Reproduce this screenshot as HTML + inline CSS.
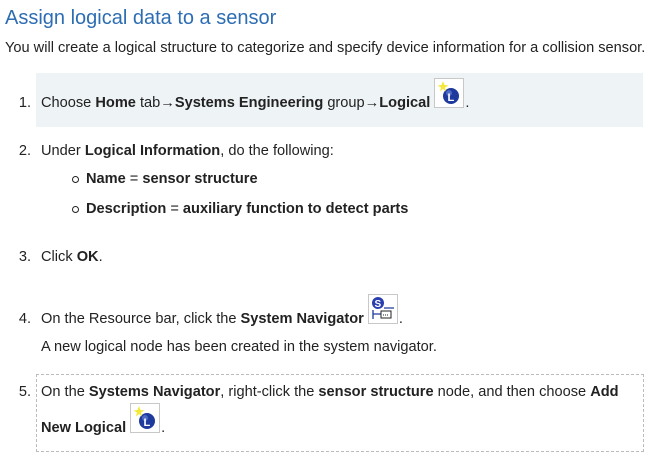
<!DOCTYPE html>
<html><head><style>
body{margin:0;width:647px;height:459px;background:#fff;font-family:"Liberation Sans",Arial,sans-serif;color:#222;position:relative;overflow:hidden}
.a{position:absolute;white-space:nowrap;font-size:14.6px;line-height:16px}
b{font-weight:bold}
.w{display:inline-block;width:35px;height:16px;position:relative;vertical-align:top}
.ic{position:absolute;left:4px;top:-17px;width:28px;height:28px;border:1px solid #c8c8c8;background:#fff}
.n{position:absolute;width:31px;text-align:right}
.t{position:absolute;left:41px}
</style></head><body>
<div class="a" style="left:5px;top:7px;font-size:20px;line-height:22px;color:#2d6db3">Assign logical data to a sensor</div>
<div class="a" style="left:5px;top:40px">You will create a logical structure to categorize and specify device information for a collision sensor.</div>

<div style="position:absolute;left:36px;top:73px;width:607px;height:54px;background:#eef3f6"></div>
<div class="a" style="left:0;top:95px"><span class="n">1.</span><span class="t">Choose <b>Home</b> tab→<b>Systems Engineering</b> group→<b>Logical</b><span class="w"><span class="ic"><svg width="28" height="28" viewBox="0 0 28 28"><circle cx="16" cy="17" r="8" fill="#1e3a9c"/><circle cx="14" cy="14" r="3" fill="#6a8ce0" opacity=".6"/><text x="12.5" y="22" font-family="Liberation Sans" font-weight="bold" font-size="11" fill="#fff">L</text><path d="M8 2l1.5 4 4 .5-3.5 2 1 4-3-2.5-3 2.5 1-4-3.5-2 4-.5z" fill="#f4e83a"/></svg></span></span>.</span></div>

<div class="a" style="left:0;top:143px"><span class="n">2.</span><span class="t">Under <b>Logical Information</b>, do the following:</span></div>
<div style="position:absolute;left:72px;top:176px;width:5px;height:5px;border:1px solid #222;border-radius:50%"></div>
<div class="a" style="left:86px;top:171px"><b>Name</b> = <b>sensor structure</b></div>
<div style="position:absolute;left:72px;top:206px;width:5px;height:5px;border:1px solid #222;border-radius:50%"></div>
<div class="a" style="left:86px;top:201px"><b>Description</b> = <b>auxiliary function to detect parts</b></div>

<div class="a" style="left:0;top:249px"><span class="n">3.</span><span class="t">Click <b>OK</b>.</span></div>

<div class="a" style="left:0;top:311px"><span class="n">4.</span><span class="t">On the Resource bar, click the <b>System Navigator</b><span class="w"><span class="ic"><svg width="28" height="28" viewBox="0 0 28 28"><circle cx="9" cy="8" r="6" fill="#2a3fae"/><text x="5.5" y="12" font-family="Liberation Sans" font-weight="bold" font-size="10" fill="#fff">S</text><path d="M4 15v9M4 19h8M15 13h10" stroke="#1e3a9c" stroke-width="1.3" fill="none"/><rect x="12" y="16" width="10" height="7" fill="none" stroke="#222"/><path d="M14 20h6" stroke="#222" stroke-dasharray="1 1"/></svg></span></span>.</span></div>
<div class="a" style="left:41px;top:339px">A new logical node has been created in the system navigator.</div>

<div style="position:absolute;left:36px;top:374px;width:606px;height:76px;border:1px dashed #bbb"></div>
<div class="a" style="left:0;top:384px"><span class="n">5.</span><span class="t">On the <b>Systems Navigator</b>, right-click the <b>sensor structure</b> node, and then choose <b>Add</b></span></div>
<div class="a" style="left:41px;top:420px"><b>New Logical</b><span class="w"><span class="ic"><svg width="28" height="28" viewBox="0 0 28 28"><circle cx="16" cy="17" r="8" fill="#1e3a9c"/><circle cx="14" cy="14" r="3" fill="#6a8ce0" opacity=".6"/><text x="12.5" y="22" font-family="Liberation Sans" font-weight="bold" font-size="11" fill="#fff">L</text><path d="M8 2l1.5 4 4 .5-3.5 2 1 4-3-2.5-3 2.5 1-4-3.5-2 4-.5z" fill="#f4e83a"/></svg></span></span>.</div>
</body></html>
